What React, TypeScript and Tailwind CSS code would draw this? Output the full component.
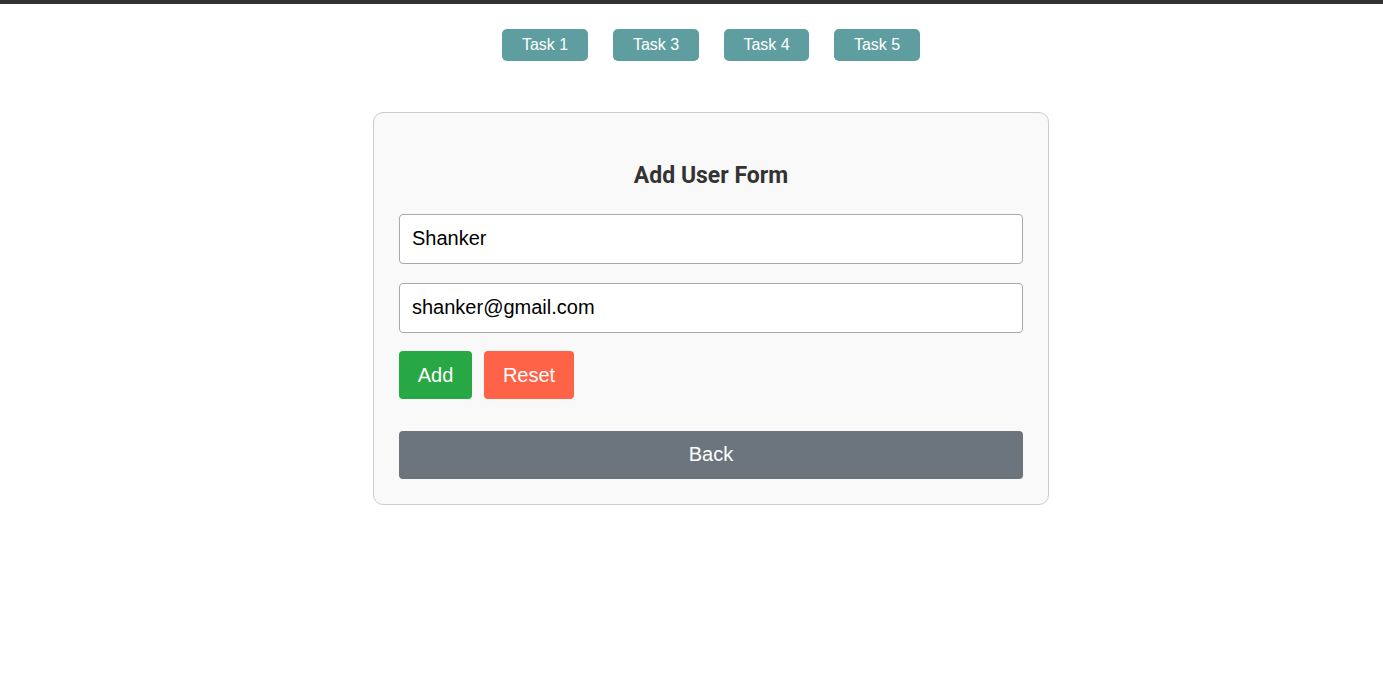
export default function App() {
  const tasks = [
    { label: "Task 1", w: "w-[86px]" },
    { label: "Task 3", w: "w-[86px]" },
    { label: "Task 4", w: "w-[85px]" },
    { label: "Task 5", w: "w-[86px]" },
  ];

  return (
    <div className="min-h-screen bg-white pl-[39px] font-['Liberation_Sans',Arial,sans-serif]">
      <div className="-ml-[39px] h-1 bg-[#333333]" />

      <nav className="mt-[25px] flex justify-center gap-[25px]">
        {tasks.map((t) => (
          <button
            key={t.label}
            className={`h-[32px] ${t.w} rounded-[5px] bg-[#5f9ea0] text-base text-white`}
          >
            {t.label}
          </button>
        ))}
      </nav>

      <main className="mx-auto mt-[51px] w-[676px] rounded-[10px] border border-[#cccccc] bg-[#f9f9f9] px-[25px] pt-[50px] pb-[25px]">
        <h2 className="text-center font-['Roboto',sans-serif] text-[23px] leading-[26px] font-bold text-[#333333]">
          Add User Form
        </h2>

        <div className="mt-[25px] flex flex-col gap-[19px]">
          <input
            defaultValue="Shanker"
            className="h-[50px] w-full rounded-[4px] border border-[#aaaaaa] bg-white px-[12px] pb-[2px] text-[20px] text-black outline-none"
          />
          <input
            defaultValue="shanker@gmail.com"
            className="h-[50px] w-full rounded-[4px] border border-[#aaaaaa] bg-white px-[12px] pb-[2px] text-[20px] text-black outline-none"
          />
        </div>

        <div className="mt-[18px] flex gap-[12px]">
          <button className="h-[48px] w-[73px] rounded-[4px] bg-[#28a745] text-[20px] text-white">
            Add
          </button>
          <button className="h-[48px] w-[90px] rounded-[4px] bg-[#ff6347] text-[20px] text-white">
            Reset
          </button>
        </div>

        <button className="mt-[32px] h-[48px] w-full rounded-[4px] bg-[#6c757d] pb-[2px] text-[20px] text-white">
          Back
        </button>
      </main>
    </div>
  );
}
